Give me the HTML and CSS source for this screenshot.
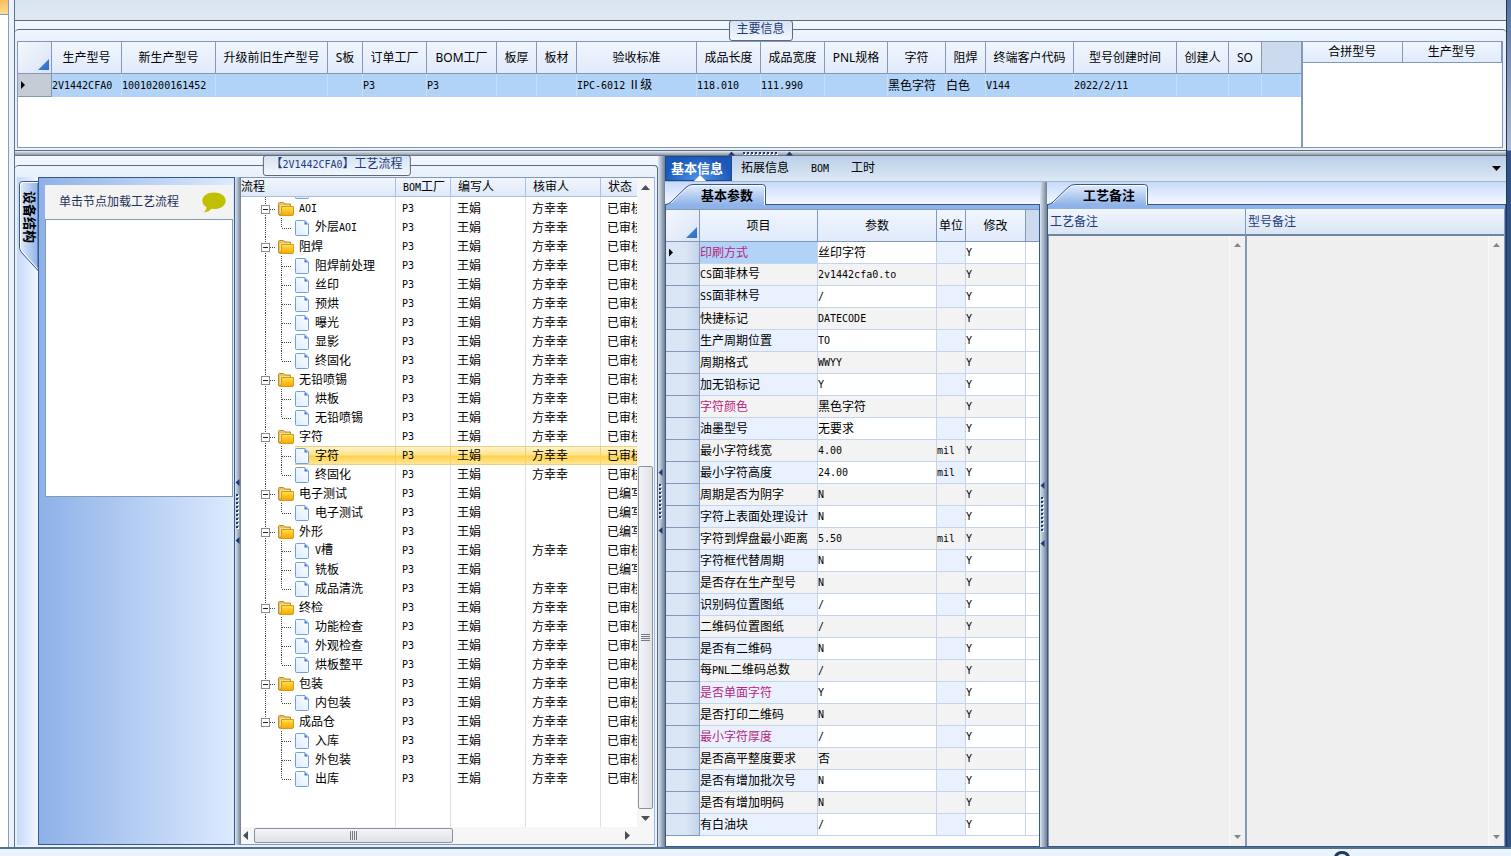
FILE: index.html
```html
<!DOCTYPE html>
<html lang="zh-CN">
  <head>
    <meta charset="UTF-8" />
    <meta name="viewport" content="width=device-width, initial-scale=1.0" />
    <title>工艺流程</title>
    <link rel="stylesheet" href="styles.css">
  </head>

  <body>
    <!-- 图标 -->
    <svg width="0" height="0" class="defs" aria-hidden="true">
      <defs>
        <linearGradient id="tab-fill" x1="0" y1="0" x2="0" y2="1">
          <stop offset="0" stop-color="#e3edfc" />
          <stop offset="1" stop-color="#8fb3e8" />
        </linearGradient>
        <linearGradient id="side-fill" x1="0" y1="0" x2="1" y2="0">
          <stop offset="0" stop-color="#e3edfc" />
          <stop offset="1" stop-color="#8fb3e8" />
        </linearGradient>
        <linearGradient id="folder-fill" x1="0" y1="0" x2="0" y2="1">
          <stop offset="0" stop-color="#ffe34a" />
          <stop offset="1" stop-color="#fba400" />
        </linearGradient>
        <linearGradient id="doc-fill" x1="1" y1="0" x2="0" y2="1">
          <stop offset="0" stop-color="#ffffff" />
          <stop offset="1" stop-color="#dcebfc" />
        </linearGradient>
      </defs>
      <symbol id="folder" viewBox="0 0 16 14">
        <path d="M.5 12.500V1.500Q.5.5 1.500.5H5.500L7 2H12.500V12.500Z" fill="#e9c25c" stroke="#b98e2c" />
        <path d="M2 3H12V11H2Z" fill="#f4dc92" />
        <path d="M3.500 4.500H15.500V12Q15.500 13.500 14 13.500H1.500Q3.500 13 3.500 10Z" fill="url(#folder-fill)" stroke="#d69a1c" />
      </symbol>
      <symbol id="doc" viewBox="0 0 14 16">
        <path d="M.5 1.500Q.5.5 1.500.5H10L13.500 4V14.500Q13.500 15.500 12.500 15.500H1.500Q.5 15.500.5 14.500Z" fill="url(#doc-fill)" stroke="#6f9fdd" />
        <path d="M9.500 1L13 4.500H9.500Z" fill="#3a77d2" />
      </symbol>
      <symbol id="grip-v" viewBox="0 0 5 65">
        <path d="M4.500 0V7L.5 3.500ZM4.500 58V65L.5 61.500Z" fill="#203a70" />
        <path d="M3 16V51" stroke="#fff" stroke-width="2" stroke-dasharray="2 2" />
        <path d="M2 15V50" stroke="#203a70" stroke-width="2" stroke-dasharray="2 2" />
      </symbol>
      <symbol id="tab-shape" viewBox="0 0 100 21">
        <path d="M0 20.500L4 18.500L20 3.500Q23 .5 27 .5H96.500Q99.500.5 99.500 3.500V21H0Z" fill="url(#tab-fill)" />
        <path d="M5 19L21 4Q24 1.500 27 1.500H96Q98.500 1.500 98.500 4V21" fill="none" stroke="#fff" />
        <path d="M0 20.500Q3 20 5 18L20 3.500Q23 .5 27 .5H96.500Q99.500.5 99.500 3.500V21" fill="none" stroke="#35588f" />
      </symbol>
    </svg>

    <div class="window">
      <div class="dock"><div class="dock-tab"></div></div>

      <div class="main">
        <div class="ribbon"></div>

        <!-- 主要信息 -->
        <section class="group info">
          <h2 class="group-title">主要信息</h2>
          <div class="group-body info-body">
            <div class="grid-box info-main">
              <table class="grid info-grid">
                <colgroup id="info-cols"></colgroup>
                <thead><tr id="info-head"></tr></thead>
                <tbody><tr id="info-row"></tr></tbody>
              </table>
            </div>
            <div class="grid-box info-side">
              <table class="grid side-grid">
                <thead><tr><th>合拼型号</th><th>生产型号</th></tr></thead>
              </table>
            </div>
          </div>
        </section>

        <div class="split-h">
          <svg width="65" height="5" viewBox="0 0 65 5">
            <path d="M0 4.500H7L3.500.5ZM58 4.500H65L61.500.5Z" fill="#203a70" />
            <path d="M16 3H51" stroke="#fff" stroke-width="2" stroke-dasharray="2 2" />
            <path d="M15 2H50" stroke="#203a70" stroke-width="2" stroke-dasharray="2 2" />
          </svg>
        </div>

        <div class="work">
          <!-- 工艺流程 -->
          <section class="group flow">
            <h2 class="group-title">【<span class="mono">2V1442CFA0</span>】工艺流程</h2>
            <div class="group-body flow-body">
              <div class="device-strip">
                <button class="side-tab" type="button">
                  <svg width="21" height="91" viewBox="0 0 21 91" aria-hidden="true">
                    <path d="M21 .5H5.500Q2.500.5 2.500 3.500V66Q2.500 69 5 72L21 89.500Z" fill="url(#side-fill)" stroke="#35588f" />
                    <path d="M21 1.500H6Q3.500 1.500 3.500 4V66Q3.500 69 6 71.500L21 88" fill="none" stroke="#fff" />
                  </svg>
                  <span>设备结构</span>
                </button>
              </div>
              <div class="device">
                <div class="device-head">
                  <span>单击节点加载工艺流程</span>
                  <svg width="24" height="21" viewBox="0 0 24 21" aria-hidden="true">
                    <path d="M12 .5C18.500.5 23.700 4 23.700 8.700S18.500 17 12 17L9.500 16.800Q6.500 20.300 1.800 20.300Q4.600 18 4.600 15.200C2 13.800.3 11.500.3 8.700.3 4 5.500.5 12 .5Z" fill="#c0c000" />
                  </svg>
                </div>
                <div class="device-list"></div>
              </div>
              <div class="split-v"><svg width="5" height="65"><use href="#grip-v" /></svg></div>
              <div class="tree">
                <div class="tree-view">
                  <table class="tree-table">
                    <thead>
                      <tr><th class="c-name">流程</th><th class="c-bom"><span class="mono">BOM</span>工厂</th><th class="c-user">编写人</th><th class="c-user">核审人</th><th class="c-state">状态</th></tr>
                    </thead>
                    <tbody id="tree"></tbody>
                  </table>
                  <div class="scroll-y">
                    <svg class="arrow" width="9" height="5" viewBox="0 0 9 5"><path d="M0 5L4.500 0L9 5Z" /></svg>
                    <div class="track"><div class="thumb"><i></i><i></i><i></i><i></i></div></div>
                    <svg class="arrow" width="9" height="5" viewBox="0 0 9 5"><path d="M0 0L4.500 5L9 0Z" /></svg>
                  </div>
                </div>
                <div class="scroll-x">
                  <svg class="arrow" width="5" height="9" viewBox="0 0 5 9"><path d="M5 0L0 4.500L5 9Z" /></svg>
                  <div class="thumb"><i></i><i></i><i></i><i></i></div>
                  <svg class="arrow" width="5" height="9" viewBox="0 0 5 9"><path d="M0 0L5 4.500L0 9Z" /></svg>
                </div>
              </div>
            </div>
          </section>

          <div class="split-v wide"><svg width="5" height="65"><use href="#grip-v" /></svg></div>

          <section class="detail">
            <nav class="tabs">
              <button type="button" class="tab active">基本信息</button>
              <button type="button" class="tab">拓展信息</button>
              <button type="button" class="tab"><span class="mono">BOM</span></button>
              <button type="button" class="tab">工时</button>
              <button type="button" class="tab-more" aria-label="更多">
                <svg width="9" height="5" viewBox="0 0 9 5"><path d="M0 0L4.500 5L9 0Z" /></svg>
              </button>
            </nav>

            <div class="detail-body">
              <!-- 基本参数 -->
              <div class="panel params">
                <div class="panel-strip">
                  <button type="button" class="panel-tab">
                    <svg width="100" height="21" aria-hidden="true"><use href="#tab-shape" /></svg>
                    <span>基本参数</span>
                  </button>
                </div>
                <div class="panel-box">
                  <table class="grid param-grid">
                    <thead>
                      <tr>
                        <th class="corner"></th><th class="p-name">项目</th><th class="p-value">参数</th><th class="p-unit">单位</th><th class="p-edit">修改</th><th class="rest"></th>
                      </tr>
                    </thead>
                    <tbody id="params"></tbody>
                  </table>
                </div>
              </div>

              <div class="split-v wide"><svg width="5" height="65"><use href="#grip-v" /></svg></div>

              <!-- 工艺备注 -->
              <div class="panel notes">
                <div class="panel-strip">
                  <button type="button" class="panel-tab">
                    <svg width="100" height="21" aria-hidden="true"><use href="#tab-shape" /></svg>
                    <span>工艺备注</span>
                  </button>
                </div>
                <div class="panel-box note-box">
                  <div class="note note-craft">
                    <label for="note-craft">工艺备注</label>
                    <div class="note-area">
                      <textarea id="note-craft" readonly></textarea>
                      <div class="note-scroll">
                        <svg width="7" height="4" viewBox="0 0 7 4"><path d="M0 4L3.500 0L7 4Z" /></svg>
                        <svg width="7" height="4" viewBox="0 0 7 4"><path d="M0 0L3.500 4L7 0Z" /></svg>
                      </div>
                    </div>
                  </div>
                  <div class="note">
                    <label for="note-model">型号备注</label>
                    <div class="note-area">
                      <textarea id="note-model" readonly></textarea>
                      <div class="note-scroll">
                        <svg width="7" height="4" viewBox="0 0 7 4"><path d="M0 4L3.500 0L7 4Z" /></svg>
                        <svg width="7" height="4" viewBox="0 0 7 4"><path d="M0 0L3.500 4L7 0Z" /></svg>
                      </div>
                    </div>
                  </div>
                </div>
              </div>
            </div>
          </section>
        </div>
      </div>

      <div class="edge"></div>
    </div>

    <footer class="status">
      <svg width="18" height="5" viewBox="0 0 18 5" aria-hidden="true"><path d="M2 7Q3.500 1.500 9 1.500T16 7" fill="none" stroke="#203a5c" stroke-width="3" /></svg>
    </footer>

    <script src="script.js"></script>
  </body>
</html>
```

FILE: styles.css
```css
* {
  box-sizing: border-box;
}

body {
  margin: 0;
  min-height: 100vh;
  display: flex;
  flex-direction: column;
  background: #eaf2fb;
  font-family: "Noto Sans", "Noto Sans CJK SC", sans-serif;
  font-size: 12px;
  line-height: 16px;
  color: #000;
}

button {
  font: inherit;
  color: inherit;
  border: none;
  background: none;
  padding: 0;
}

svg {
  display: block;
  flex: none;
}

.defs {
  position: absolute;
}

.mono {
  font-family: "DejaVu Sans Mono", monospace;
  font-size: 10px;
}

/* window frame */
.window {
  flex: 1;
  display: flex;
  border-bottom: 2px solid #56708f;
}

.dock {
  width: 9px;
  margin-right: 5px;
  background: #fff;
  border-right: 1px solid #8c9cb4;
}

.dock-tab {
  height: 15px;
  background: linear-gradient(#fbbd5e, #fedd8e);
  border-bottom: 1px solid #8c9cb4;
}

.main {
  flex: 1;
  min-width: 0;
  display: flex;
  flex-direction: column;
  border-left: 1px solid #5f6f85;
}

.edge {
  width: 5px;
  border-left: 1px solid #22344f;
  background: linear-gradient(#54749c 0, #a9bbd2 150px, #2f5285 151px, #2f5285 100%);
}

.status {
  height: 7px;
  display: flex;
  justify-content: flex-end;
  align-items: flex-end;
  padding-right: 160px;
  overflow: hidden;
}

.ribbon {
  height: 21px;
  background: linear-gradient(#d9e4f1, #dfe9f4);
  border-bottom: 1px solid #5a6b7f;
}

/* group box */
.group {
  position: relative;
  background: linear-gradient(#f1f7fe, #e8f1fb 20px);
}

.group-title {
  position: absolute;
  top: -1px;
  left: 50%;
  transform: translateX(-50%);
  margin: 0;
  padding: 0 7px;
  height: 21px;
  font-size: 12px;
  line-height: 16px;
  font-weight: normal;
  white-space: nowrap;
  color: #1f3a7a;
  background: linear-gradient(#d6e3f2, #f2f7fd);
  border: 1px solid #5a6b7f;
  border-radius: 3px;
}

.group-body {
  border-top: 1px solid #5a6b7f;
  border-radius: 4px 4px 0 0;
  padding: 11px 3px 2px 2px;
}

/* grids */
.grid-box {
  background: #fff;
  border: 1px solid #8499b8;
}

.grid {
  width: 100%;
  table-layout: fixed;
  border-collapse: separate;
  border-spacing: 0;
}

.grid th,
.grid td {
  padding: 0;
  overflow: hidden;
  white-space: nowrap;
}

.grid th {
  height: 32px;
  font-weight: normal;
  text-align: center;
  background: linear-gradient(#f0f6fe, #e0eafa);
  border-right: 1px solid #8499b8;
  border-bottom: 1px solid #8499b8;
}

.grid th.rest {
  background: #ccdaee;
  border-right: none;
}

.grid th.corner {
  background: linear-gradient(135deg, #f4f8fe, #d8e4f4);
}

.corner::after {
  content: "";
  display: block;
  width: 11px;
  height: 11px;
  margin: 14px 2px 0 auto;
  background: linear-gradient(135deg, #4f8ade, #2f6cc8);
  clip-path: polygon(100% 0, 100% 100%, 0 100%);
}

.marker {
  display: block;
  width: 4px;
  height: 8px;
  margin-left: 3px;
  background: #000;
  clip-path: polygon(0 0, 100% 50%, 0 100%);
}

.info {
  padding-top: 8px;
}

.info-body {
  display: flex;
}

.info-main {
  flex: 1;
  min-width: 0;
  min-height: 107px;
}

.info-side {
  width: 201px;
}

.info-grid td {
  height: 23px;
  background: #b0d3f7;
  border-right: 1px solid #c4def9;
}

.info-grid td:first-child {
  background: #c5ccd6;
  border-right: 1px solid #8499b8;
  border-bottom: 1px solid #8499b8;
}

.side-grid th {
  height: 21px;
}

/* splitters */
.split-h {
  height: 6px;
  display: flex;
  justify-content: center;
  background: linear-gradient(#e4eaf1, #8e99a6);
  border-top: 1px solid #5f6f80;
  border-bottom: 1px solid #6b7885;
}

.split-v {
  width: 6px;
  flex: none;
  display: flex;
  align-items: center;
  background: linear-gradient(to right, #dbe6f3, #717f90);
}

.split-v.wide {
  width: 7px;
}

/* work area */
.work {
  flex: 1;
  display: flex;
}

.flow {
  width: 643px;
  flex: none;
  display: flex;
}

.flow-body {
  flex: 1;
  display: flex;
  margin-top: 9px;
  padding-right: 2px;
  border-right: 1px solid #5a6b7f;
}

.device-strip {
  width: 21px;
  padding-top: 4px;
  background: linear-gradient(to right, #c6d9fb, #f2f7ff);
}

.side-tab {
  position: relative;
  display: block;
  width: 21px;
  height: 91px;
}

.side-tab svg {
  position: absolute;
  top: 0;
  left: 0;
}

.side-tab span {
  position: relative;
  display: block;
  width: 21px;
  height: 91px;
  padding: 10px 0 0 3px;
  writing-mode: vertical-rl;
  text-orientation: sideways;
  text-align: left;
  font-size: 13px;
  line-height: 16px;
  font-weight: bold;
}

.device {
  width: 197px;
  display: flex;
  flex-direction: column;
  padding: 7px 1px 0 6px;
  background: linear-gradient(to right, #8db1e8, #dceafd);
  border: 1px solid #35588f;
}

.device-head {
  height: 34px;
  display: flex;
  align-items: center;
  justify-content: space-between;
  padding: 0 7px 0 14px;
  background: #f3f3f3;
  color: #1f3358;
}

.device-list {
  height: 278px;
  background: #fff;
  border: 1px solid #7f9db9;
}

/* tree */
.tree {
  flex: 1;
  min-width: 0;
  display: flex;
  flex-direction: column;
  background: #fff;
  border-top: 1px solid #8499b8;
  border-right: 1px solid #9db9e0;
  border-bottom: 1px solid #8499b8;
}

.tree-view {
  flex: 1;
  display: flex;
}

.tree-table {
  flex: 1;
  width: 396px;
  table-layout: fixed;
  border-collapse: separate;
  border-spacing: 0;
}

.tree-table th {
  height: 19px;
  padding: 0 0 0 7px;
  text-align: left;
  font-weight: normal;
  overflow: hidden;
  background: linear-gradient(#f1f6fd, #dfe9f7);
  border-right: 1px solid #a9c0e2;
  border-bottom: 1px solid #a9c0e2;
}

.tree-table th.c-name {
  width: 155px;
  padding-left: 0;
}

.tree-table th:last-child {
  border-right: none;
}

.c-bom {
  width: 55px;
}

.c-user {
  width: 75px;
}

.tree-table td {
  height: 19px;
  padding: 0 0 0 6px;
  white-space: nowrap;
  overflow: hidden;
  border-right: 1px solid #dcdfe4;
}

.tree-table td:first-child {
  padding: 0;
}

.tree-table td:last-child {
  border-right: none;
}

.tree-table .cut td,
.tree-table .cut .node {
  height: 2px;
}

.tree-table .cut .node {
  align-items: flex-end;
  overflow: hidden;
}

.tree-table .fill td {
  height: auto;
}

.node,
.branch {
  height: 19px;
  display: flex;
  align-items: center;
}

.branch {
  flex: 1;
}

.label {
  padding-left: 6px;
}

.node > .label {
  padding-left: 5px;
}

.tree-table .selected td {
  border-right-color: #f3d169;
}

.selected td:not(:first-child),
.selected .branch {
  background: linear-gradient(#fff3c9 0, #ffe48e 45%, #ffd24c 55%, #ffe697 100%);
  border-top: 1px solid #e8d08a;
  border-bottom: 1px solid #e8d08a;
}

/* scroll bars */
.arrow {
  fill: #4a4f57;
}

.scroll-y {
  width: 17px;
  flex: none;
  display: flex;
  flex-direction: column;
  align-items: center;
  padding: 7px 0 6px;
  background: #f6f6f7;
}

.track {
  flex: 1;
  width: 15px;
  display: flex;
  flex-direction: column;
  justify-content: flex-end;
  padding: 7px 0;
}

.thumb {
  display: flex;
  align-items: center;
  justify-content: center;
  gap: 1px;
  background: linear-gradient(to right, #f3f4f7, #dfe2e8);
  border: 1px solid #8b909a;
  border-radius: 2px;
}

.track .thumb {
  flex-direction: column;
  height: 56%;
}

.thumb i {
  width: 9px;
  height: 1px;
  background: #777d88;
}

.scroll-x {
  height: 17px;
  display: flex;
  align-items: center;
  padding: 0 24px 0 2px;
  background: #f6f6f7;
}

.scroll-x .thumb {
  width: 199px;
  height: 15px;
  margin: 0 auto 0 6px;
  background: linear-gradient(#f3f4f7, #dfe2e8);
}

.scroll-x .thumb i {
  width: 1px;
  height: 9px;
}

/* detail */
.detail {
  flex: 1;
  min-width: 0;
  display: flex;
  flex-direction: column;
}

.tabs {
  height: 26px;
  display: flex;
  background: linear-gradient(#bccfe8, #dce8f5);
  border-bottom: 1px solid #a3b5c8;
}

.tab {
  position: relative;
  height: 24px;
  margin-right: 4px;
  padding: 0 9px;
}

.tab.active {
  height: 25px;
  margin-right: 0;
  padding: 0 8px 2px 5px;
  font-size: 13px;
  font-weight: bold;
  color: #fff;
  background: radial-gradient(ellipse at 50% 100%, #4f95e6, #1a57b6 75%);
  border: 1px solid #174a9c;
}

.tab.active::after {
  content: "";
  position: absolute;
  bottom: -1px;
  left: 28px;
  width: 12px;
  height: 6px;
  background: #fff;
  clip-path: polygon(50% 0, 100% 100%, 0 100%);
}

.tab-more {
  margin-left: auto;
  padding-right: 5px;
}

.detail-body {
  flex: 1;
  display: flex;
}

.panel {
  display: flex;
  flex-direction: column;
}

.params {
  width: 375px;
  flex: none;
}

.notes {
  flex: 1;
  min-width: 0;
}

.panel-strip {
  height: 22px;
  padding: 2px 0 0 1px;
  background: linear-gradient(#c8dafb, #f4f8ff);
}

.panel-tab {
  position: relative;
  z-index: 1;
  width: 100px;
  height: 21px;
  padding: 0 0 0 22px;
  font-size: 13px;
  font-weight: bold;
}

.panel-tab svg {
  position: absolute;
  top: 0;
  left: 0;
}

.panel-tab span {
  position: relative;
}

.panel-box {
  flex: 1;
  background: #fff;
  border: 1px solid #35588f;
}

.param-grid {
  border-top: 4px solid #8fb3e8;
}

.param-grid th {
  height: 33px;
  border-top: 1px solid #8499b8;
}

.param-grid th.corner {
  width: 34px;
}

.p-name {
  width: 118px;
}

.p-value {
  width: 119px;
}

.p-unit {
  width: 29px;
}

.p-edit {
  width: 60px;
}

.param-grid td {
  height: 22px;
  border-right: 1px solid #c3d4ec;
  border-bottom: 1px solid #c3d4ec;
}

.param-grid tr:nth-child(even) td {
  background: #f3f3f3;
}

.param-grid tr:nth-child(odd) td:nth-child(4),
.param-grid tr:nth-child(odd) td:nth-child(2) {
  background: #e8f1fd;
}

.param-grid tr td:first-child,
.param-grid tr:nth-child(even) td:first-child {
  background: linear-gradient(to right, #dae6f5 60%, #c3d3ea);
  border-right-color: #8499b8;
  border-bottom-color: #8499b8;
}

.param-grid tr:nth-child(n) td:last-child {
  background: #fff;
  border-right: none;
}

.param-grid tr.current:nth-child(odd) td:nth-child(2) {
  background: #b0d3f7;
}

.param-grid td.key {
  color: #b8257f;
}

.note-box {
  display: flex;
  padding-top: 4px;
  background: #8fb3e8;
}

.note {
  flex: 1;
  display: flex;
  flex-direction: column;
  border-right: 1px solid #8499b8;
}

.note-craft {
  flex: none;
  width: 198px;
}

.note label {
  height: 27px;
  padding: 5px 2px;
  color: #1f3a7a;
  background: linear-gradient(#f1f6fc, #d8e5f3);
  border-bottom: 2px solid #6f86a3;
}

.note-area {
  flex: 1;
  display: flex;
  background: #efefef;
  border-left: 1px solid #8499b8;
}

.note-area textarea {
  flex: 1;
  min-width: 0;
  padding: 2px;
  border: none;
  outline: none;
  resize: none;
  background: #efefef;
  font: inherit;
}

.note-scroll {
  width: 16px;
  display: flex;
  flex-direction: column;
  align-items: center;
  justify-content: space-between;
  padding: 7px 0;
  background: #f1f1f1;
  border-left: 1px solid #fafafa;
  fill: #858585;
}
```

FILE: script.js
```js
// 西文用等宽字体
function fmt(text) {
  return text.replace(/[!-~]+/g, '<span class="mono">$&</span>');
}

// 主要信息: 列名, 宽度, 值
const info = [
  ['', 34, null],
  ['生产型号', 70, '2V1442CFA0'],
  ['新生产型号', 94, '10010200161452'],
  ['升级前旧生产型号', 112, ''],
  ['S板', 35, ''],
  ['订单工厂', 64, 'P3'],
  ['BOM工厂', 70, 'P3'],
  ['板厚', 40, ''],
  ['板材', 40, ''],
  ['验收标准', 120, 'IPC-6012 Ⅱ级'],
  ['成品长度', 64, '118.010'],
  ['成品宽度', 64, '111.990'],
  ['PNL规格', 63, ''],
  ['字符', 58, '黑色字符'],
  ['阻焊', 40, '白色'],
  ['终端客户代码', 88, 'V144'],
  ['型号创建时间', 103, '2022/2/11'],
  ['创建人', 52, ''],
  ['SO', 33, ''],
];

document.getElementById('info-cols').innerHTML =
  info.map((c) => `<col style="width: ${c[1]}px">`).join('') + '<col>';
document.getElementById('info-head').innerHTML =
  info.map((c) => `<th class="${c[0] ? '' : 'corner'}">${c[0]}</th>`).join('') +
  '<th class="rest"></th>';
document.getElementById('info-row').innerHTML =
  info
    .map((c) => `<td>${c[2] === null ? '<i class="marker"></i>' : fmt(c[2])}</td>`)
    .join('') + '<td></td>';

// 工艺流程: 工序, [核审人, 状态], 子节点
const done = ['方幸幸', '已审核'];
const wip = ['', '已编写'];
const flow = [
  ['AOI', done, [['外层AOI', done]]],
  ['阻焊', done, [['阻焊前处理', done], ['丝印', done], ['预烘', done], ['曝光', done], ['显影', done], ['终固化', done]]],
  ['无铅喷锡', done, [['烘板', done], ['无铅喷锡', done]]],
  ['字符', done, [['字符', done, 'selected'], ['终固化', done]]],
  ['电子测试', wip, [['电子测试', wip]]],
  ['外形', wip, [['V槽', done], ['铣板', wip], ['成品清洗', done]]],
  ['终检', done, [['功能检查', done], ['外观检查', done], ['烘板整平', done]]],
  ['包装', done, [['内包装', done]]],
  ['成品仓', done, [['入库', done], ['外包装', done], ['出库', done]]],
];

const docIcon = '<svg width="14" height="16"><use href="#doc" /></svg>';
const folderIcon = '<svg width="16" height="14"><use href="#folder" /></svg>';

function dots(d) {
  return `<path d="${d}" stroke="#444" stroke-dasharray="1 1" fill="none" />`;
}

function treeRow(node, state, cls) {
  return `<tr class="${cls || ''}"><td><div class="node">${node}</div></td>
    <td>${fmt('P3')}</td><td>王娟</td><td>${state[0]}</td><td>${state[1]}</td></tr>`;
}

// 滚动后顶部只露出一点的行
let rows = `<tr class="cut"><td><div class="node"><svg width="54" height="2">${dots('M24.500 0V2')}</svg>${docIcon}</div></td>
  <td></td><td></td><td></td><td></td></tr>`;

flow.forEach(([name, state, children], i) => {
  const last = i === flow.length - 1;
  rows += treeRow(
    `<svg width="37" height="19">${dots(last ? 'M24.500 0V10' : 'M24.500 0V19')}${dots('M29 10.500H35')}
      <rect x="20.500" y="6.500" width="8" height="8" fill="#fff" stroke="#8c8c8c" />
      <path d="M22 10.500H27" stroke="#222" /></svg>
      ${folderIcon}<span class="label">${fmt(name)}</span>`,
    state
  );
  children.forEach(([child, childState, cls], j) => {
    const end = j === children.length - 1;
    rows += treeRow(
      `<svg width="54" height="19">${last ? '' : dots('M24.500 0V19')}
        ${dots(end ? 'M40.500 0V10' : 'M40.500 0V19')}${dots('M41 10.500H51')}</svg>
        <div class="branch">${docIcon}<span class="label">${fmt(child)}</span></div>`,
      childState,
      cls
    );
  });
});

rows += '<tr class="fill"><td></td><td></td><td></td><td></td><td></td></tr>';
document.getElementById('tree').innerHTML = rows;

// 基本参数: 项目, 参数, 单位, 是否重点
const params = [
  ['印刷方式', '丝印字符', '', true],
  ['CS面菲林号', '2v1442cfa0.to'],
  ['SS面菲林号', '/'],
  ['快捷标记', 'DATECODE'],
  ['生产周期位置', 'TO'],
  ['周期格式', 'WWYY'],
  ['加无铅标记', 'Y'],
  ['字符颜色', '黑色字符', '', true],
  ['油墨型号', '无要求'],
  ['最小字符线宽', '4.00', 'mil'],
  ['最小字符高度', '24.00', 'mil'],
  ['周期是否为阴字', 'N'],
  ['字符上表面处理设计', 'N'],
  ['字符到焊盘最小距离', '5.50', 'mil'],
  ['字符框代替周期', 'N'],
  ['是否存在生产型号', 'N'],
  ['识别码位置图纸', '/'],
  ['二维码位置图纸', '/'],
  ['是否有二维码', 'N'],
  ['每PNL二维码总数', '/'],
  ['是否单面字符', 'Y', '', true],
  ['是否打印二维码', 'N'],
  ['最小字符厚度', '/', '', true],
  ['是否高平整度要求', '否'],
  ['是否有增加批次号', 'N'],
  ['是否有增加明码', 'N'],
  ['有白油块', '/'],
];

document.getElementById('params').innerHTML = params
  .map(
    ([name, value, unit, key], i) => `<tr class="${i === 0 ? 'current' : ''}">
      <td>${i === 0 ? '<i class="marker"></i>' : ''}</td>
      <td class="${key ? 'key' : ''}">${fmt(name)}</td>
      <td>${fmt(value)}</td><td>${fmt(unit || '')}</td><td>${fmt('Y')}</td><td></td></tr>`
  )
  .join('');
```
